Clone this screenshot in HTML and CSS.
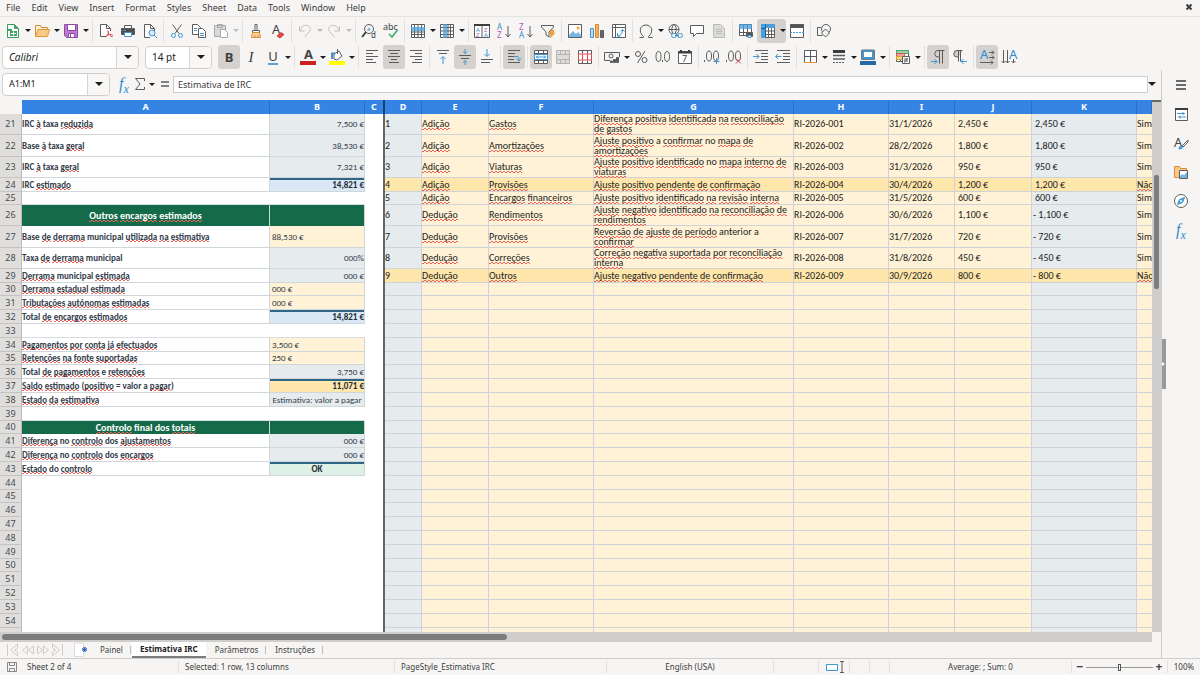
FILE: index.html
```html
<!DOCTYPE html>
<html lang="en">
<head>
<meta charset="utf-8">
<title>Estimativa IRC</title>
<link rel="stylesheet" href="styles.css">
</head>
<body>
<nav class="menubar" aria-label="Menu">
  <button>File</button><button>Edit</button><button>View</button><button>Insert</button><button>Format</button><button>Styles</button><button>Sheet</button><button>Data</button><button>Tools</button><button>Window</button><button>Help</button>
  <button class="close" aria-label="Close document"><svg viewBox="0 0 8 8" width="8" height="8"><path class="thick" d="M1.500 1.500l5 5M6.500 1.500l-5 5"/></svg></button>
</nav>

<div class="toolbar standard" role="toolbar" aria-label="Standard">
  <button class="tb" aria-label="New"><svg viewBox="0 0 16 16"><path class="g" fill="#fff" d="M2.500 1.500h7l4 4v9h-11z"/><path class="fg" d="M9 1l5 5H9zM3 6h4v2H3zM5 8h7v5H5z"/><path stroke="#fff" d="M6 10.500h5M8.500 8.500v4"/></svg></button><button class="dd" aria-label="New options"></button>
  <button class="tb" aria-label="Open"><svg viewBox="0 0 16 16"><path stroke="#c98f3c" fill="#fff0d0" d="M1.500 13V2.500h5l1 2h6v3"/><path stroke="#e2973b" fill="#f8c987" d="M1.500 13.500L4 6.500h11.500l-2 7z"/></svg></button><button class="dd" aria-label="Recent files"></button>
  <button class="tb" aria-label="Save"><svg viewBox="0 0 16 16"><path stroke="#8d4aa6" fill="#bd78cf" d="M1.500 1.500h13v13H4l-2.500-2z"/><path fill="#fff" stroke="#8d4aa6" d="M4.500 1.500h8v6h-8zM5.500 10.500h6v4h-6z"/><path stroke="#8d4aa6" d="M7.500 11v3"/></svg></button><button class="dd" aria-label="Save options"></button>
  <i class="sep"></i>
  <button class="tb" aria-label="Export as PDF"><svg viewBox="0 0 16 16"><path fill="#fff" d="M8 13.500H2.500v-12h6l4 4V8M8.500 1.500v4h4"/><path class="r" d="M7 14c3-1 4-4 3-6.500M8 13c2-2 5-2 7-.5M10 8c0 3 2 5 4.500 6"/></svg></button>
  <button class="tb" aria-label="Print"><svg viewBox="0 0 16 16"><path d="M4.500 5V2.500h7V5" fill="#fff"/><path fill="#4b4f52" d="M1.500 5.500h13v6h-13z"/><path class="b" fill="#fff" d="M4.500 9.500h7v4h-7z"/><path class="b" d="M3 7.500h3"/></svg></button>
  <button class="tb" aria-label="Print preview"><svg viewBox="0 0 16 16"><path fill="#fff" d="M8 14.500H2.500v-13h6l4 4V8M8.500 1.500v4h4"/><circle class="b" cx="10" cy="10" r="3" fill="#d8ecf8"/><path class="b" d="M12 12l3 3"/></svg></button>
  <i class="sep"></i>
  <button class="tb" aria-label="Cut"><svg viewBox="0 0 16 16"><path d="M3.500 1.500L10 10.500M12.500 1.500L6 10.500"/><circle class="b" cx="4.500" cy="12.500" r="2"/><circle class="b" cx="11.500" cy="12.500" r="2"/></svg></button>
  <button class="tb" aria-label="Copy"><svg viewBox="0 0 16 16"><path fill="#fff" d="M1.500 1.500h5l3 3v7h-8z"/><path fill="#fff" d="M7.500 5.500h4l3 3v6h-7z"/><path class="b" d="M3 5.500h3M3 7.500h3M9 10.500h4M9 12.500h4"/></svg></button>
  <button class="tb off" aria-label="Paste" disabled><svg viewBox="0 0 16 16"><path fill="#d8d8d8" stroke="#aaa" d="M1.500 2.500h11v11h-11zM4.500 1.500h5v3h-5z"/><path fill="#fff" stroke="#aaa" d="M7.500 6.500h4l3 3v5h-7z"/></svg></button><button class="dd off" aria-label="Paste options" disabled></button>
  <i class="sep"></i>
  <button class="tb" aria-label="Clone formatting"><svg viewBox="0 0 16 16"><path fill="#fff" d="M7 1.500h2v6H7zM4.500 7.500h7v2h-7z"/><path stroke="#d98a3a" fill="#f8d3a0" d="M4.500 9.500h7l1 5h-9zM7 12v2M10 12v2"/></svg></button>
  <button class="tb" aria-label="Clear formatting"><svg viewBox="0 0 16 16"><text class="tl" x="2" y="11">A</text><path fill="#e2484d" stroke="#c43" d="M7 13l4-3.500 3 2-4 3.500z"/></svg></button>
  <i class="sep"></i>
  <button class="tb off" aria-label="Undo" disabled><svg viewBox="0 0 16 16"><path stroke="#c4c2c0" d="M2.500 3v5h5M2.500 8l3-4.500c4-3 10 0 7 5l-5 5.500"/></svg></button><button class="dd off" aria-label="Undo list" disabled></button>
  <button class="tb off" aria-label="Redo" disabled><svg viewBox="0 0 16 16"><path stroke="#c4c2c0" d="M13.500 3v5h-5M13.500 8l-3-4.500c-4-3-10 0-7 5l5 5.500"/></svg></button><button class="dd off" aria-label="Redo list" disabled></button>
  <i class="sep"></i>
  <button class="tb" aria-label="Find and replace"><svg viewBox="0 0 16 16"><circle cx="8" cy="6" r="4.500"/><path class="thick" d="M5 9l-4 5"/><text class="ts tb-blue" x="6" y="8">a</text><text class="tm" x="10" y="15">d</text></svg></button>
  <button class="tb" aria-label="Spelling"><svg viewBox="0 0 16 16"><text class="tx" x="0" y="7">abc</text><path stroke="#3fae6a" stroke-width="1.500" d="M6 11l3 3 5.500-7"/></svg></button>
  <i class="sep"></i>
  <button class="tb" aria-label="Row"><svg viewBox="0 0 16 16"><path fill="#fff" d="M1.500 1.500h13v13h-13z"/><path d="M1.500 11.500h13M4.500 1.500v13M8 1.500v13M11.500 1.500v13M1.500 9h13"/><path class="fb" d="M1 4h14v4H1z"/></svg></button><button class="dd" aria-label="Row options"></button>
  <button class="tb" aria-label="Column"><svg viewBox="0 0 16 16"><path fill="#fff" d="M1.500 1.500h13v13h-13z"/><path d="M11.500 1.500v13M1.500 4.500h13M1.500 8h13M1.500 11.500h13M9 1.500v13"/><path class="fb" d="M4 1h4v14H4z"/></svg></button><button class="dd" aria-label="Column options"></button>
  <i class="sep"></i>
  <button class="tb" aria-label="Sort"><svg viewBox="0 0 16 16"><path fill="#fff" d="M.5 1.500h15v13H.5zM8 3v11"/><path class="thick" d="M0 2h16"/><text class="ts tb-blue" x="2" y="9">A</text><text class="ts tb-pink" x="2" y="14">Z</text><text class="ts tb-pink" x="10" y="9">Z</text><text class="ts tb-blue" x="10" y="14">A</text></svg></button>
  <button class="tb" aria-label="Sort ascending"><svg viewBox="0 0 16 16"><text class="tm tb-blue" x="1" y="7">A</text><text class="tm tb-pink" x="1" y="15">Z</text><path d="M12 3v11M9.500 11l2.500 3 2.500-3"/></svg></button>
  <button class="tb" aria-label="Sort descending"><svg viewBox="0 0 16 16"><text class="tm tb-pink" x="1" y="7">Z</text><text class="tm tb-blue" x="1" y="15">A</text><path d="M12 3v11M9.500 11l2.500 3 2.500-3"/></svg></button>
  <button class="tb" aria-label="AutoFilter"><svg viewBox="0 0 16 16"><path d="M1.500 2.500h12v1.500L9 9v5l-3-2V9L1.500 4z"/><path fill="#f4a23c" stroke="#e08a2a" stroke-width=".5" d="M11 7h3l-1 3h2l-5 5 1-4H9.500z"/></svg></button>
  <i class="sep"></i>
  <button class="tb" aria-label="Insert image"><svg viewBox="0 0 16 16"><path fill="#fff" d="M1.500 1.500h13v13h-13z"/><path class="fb" d="M2 14v-2l4-4 3 3 2-2 3 3v2z"/><circle cx="11" cy="5" r="1.500" fill="#f4a23c" stroke="none"/></svg></button>
  <button class="tb" aria-label="Insert chart"><svg viewBox="0 0 16 16"><path class="b" fill="#b9dcf2" d="M1.500 5.500h3v9h-3z"/><path stroke="#d98a3a" fill="#f4b060" d="M6.500 1.500h3v13h-3z"/><path fill="#666" d="M11.500 7.500h3v7h-3z"/></svg></button>
  <button class="tb" aria-label="Insert pivot table"><svg viewBox="0 0 16 16"><path fill="#fff" d="M1.500 1.500h13v13h-13zM1.500 4.500h13M4.500 1.500v13"/><path class="b" d="M6.500 10v3h3M6.500 13c4-1 5-3 5-6M9.500 8.500l2-2 2 2"/></svg></button>
  <i class="sep"></i>
  <button class="tb" aria-label="Special character"><svg viewBox="0 0 16 16"><path d="M1.500 14.500h4v-1C0 9 2 2 8 2s8 7 2.500 11.500v1h4"/></svg></button><button class="dd" aria-label="More characters"></button>
  <button class="tb" aria-label="Hyperlink"><svg viewBox="0 0 16 16"><circle cx="7" cy="6.500" r="5"/><path d="M2 6.500h10M7 1.500c-3 3-3 7 0 10M7 1.500c3 3 3 7 0 10"/><rect class="b" fill="#f6f5f4" x="4.500" y="10.500" width="5" height="4" rx="2"/><rect class="b" fill="#f6f5f4" x="10.500" y="10.500" width="5" height="4" rx="2"/><path class="b" d="M8 12.500h4"/></svg></button>
  <button class="tb" aria-label="Comment"><svg viewBox="0 0 16 16"><path fill="#fff" d="M1.500 2.500h13v8h-7l-3 3v-3h-3z"/></svg></button>
  <button class="tb off" aria-label="Headers and footers" disabled><svg viewBox="0 0 16 16"><path fill="#dcdbda" stroke="#bbb" d="M2.500 1.500h7l4 4v9h-11zM5 6.500h6M5 8.500h6M5 10.500h6"/></svg></button>
  <i class="sep"></i>
  <button class="tb" aria-label="Print area"><svg viewBox="0 0 16 16"><path fill="#fff" d="M1.500 1.500h12v11h-12zM1.500 9.500h12M5.500 1.500v11M9.500 1.500v11"/><path class="fb" d="M1 1h13v5H1z"/><path fill="#555" d="M8.500 9.500h6v4h-6z"/><path class="b" fill="#fff" d="M10 12.500h3v2h-3z"/></svg></button>
  <button class="tb on left" aria-label="Freeze rows and columns" aria-pressed="true"><svg viewBox="0 0 16 16"><path fill="#fff" d="M1.500 1.500h13v13h-13zM1.500 8h13M1.500 11.500h13M8.500 1.500v13M11.500 1.500v13"/><path fill="#4a9fdc" stroke="none" d="M1 1h14v4H6v10H1z"/><path stroke="#1d5f96" d="M1 5.500h4.500V15M5.500 1.500v4"/></svg></button><button class="dd on" aria-label="Freeze options"></button>
  <button class="tb" aria-label="Split window"><svg viewBox="0 0 16 16"><path fill="#fff" d="M1.500 1.500h13v13h-13z"/><path fill="#555" d="M1.500 1.500h13v3h-13z"/><path class="b" stroke-dasharray="2 1" d="M1 9.500h14"/></svg></button>
  <i class="sep"></i>
  <button class="tb" aria-label="Show draw functions"><svg viewBox="0 0 16 16"><path d="M5 4.500H1.500v8h5"/><circle cx="10" cy="6" r="4.500"/><path fill="#f6f5f4" d="M9.500 6l4 4-4 4-4-4z"/></svg></button>
</div>

<div class="toolbar formatting" role="toolbar" aria-label="Formatting">
  <div class="combo fontname"><input aria-label="Font name" value="Calibri"><button aria-label="Font list"></button></div>
  <div class="combo fontsize"><input aria-label="Font size" value="14 pt"><button aria-label="Size list"></button></div>
  <button class="tb on glyph" aria-label="Bold" aria-pressed="true"><b>B</b></button>
  <button class="tb glyph" aria-label="Italic"><em>I</em></button>
  <button class="tb glyph" aria-label="Underline"><span class="und">U</span></button><button class="dd" aria-label="Underline styles"></button>
  <i class="sep"></i>
  <button class="tb" aria-label="Font color"><svg viewBox="0 0 16 16"><text class="tl strong" x="4" y="10">A</text><path fill="#c9211e" stroke="none" d="M0 12h16v4H0z"/></svg></button><button class="dd" aria-label="Font colors"></button>
  <button class="tb" aria-label="Background color"><svg viewBox="0 0 16 16"><path fill="#fff" d="M5 5l5-3 3 5-5 4-3-1z"/><path class="b" stroke-width="2" d="M3 10V4.500h3"/><path d="M8.500 0v5"/><path fill="#ff0" stroke="none" d="M0 12h16v4H0z"/></svg></button><button class="dd" aria-label="Background colors"></button>
  <i class="sep"></i>
  <button class="tb" aria-label="Align left"><svg viewBox="0 0 16 16"><path d="M2 1.500h12M2 4.500h7M2 7.500h12M2 10.500h7M2 13.500h10"/></svg></button>
  <button class="tb on" aria-label="Center" aria-pressed="true"><svg viewBox="0 0 16 16"><path d="M2 1.500h12M4 4.500h8M2 7.500h12M5 10.500h6M3 13.500h10"/></svg></button>
  <button class="tb" aria-label="Align right"><svg viewBox="0 0 16 16"><path d="M2 1.500h12M7 4.500h7M2 7.500h12M7 10.500h7M4 13.500h10"/></svg></button>
  <i class="sep"></i>
  <button class="tb" aria-label="Align top"><svg viewBox="0 0 16 16"><path d="M2 1.500h12M4 4.500h8"/><path class="b" d="M8 15V8M5.500 10L8 7.500l2.500 2.500"/></svg></button>
  <button class="tb on" aria-label="Center vertically" aria-pressed="true"><svg viewBox="0 0 16 16"><path d="M2 6.500h12M4 9.500h8"/><path class="b" d="M8 0v4.500M6 2.500l2 2 2-2M8 16v-4.500M6 13.500l2-2 2 2"/></svg></button>
  <button class="tb" aria-label="Align bottom"><svg viewBox="0 0 16 16"><path d="M2 10.500h12M2 13.500h9"/><path class="b" d="M8 0v7M5.500 5L8 7.500 10.500 5"/></svg></button>
  <i class="sep"></i>
  <button class="tb on" aria-label="Wrap text" aria-pressed="true"><svg viewBox="0 0 16 16"><path d="M2 1.500h12M2 4.500h7M2 7.500h6M2 10.500h6M2 13.500h12"/><path class="b" d="M8 7.500h3c2 0 2 1 2 4M10.500 9.500l2.500 2.500 2-2.500"/></svg></button>
  <i class="sep"></i>
  <button class="tb on" aria-label="Merge and center" aria-pressed="true"><svg viewBox="0 0 16 16"><path fill="#fff" d="M1.500 1.500h13v13h-13zM1.500 4.500h13M1.500 11.500h13M5.500 1.500v3M10.500 1.500v3M5.500 11.500v3M10.500 11.500v3"/><path class="b" fill="#fff" d="M1.500 5.500h13v5h-13zM3 8h10M5 6.500L3.500 8 5 9.500M11 6.500L12.500 8 11 9.500"/></svg></button>
  <button class="tb off" aria-label="Merge cells" disabled><svg viewBox="0 0 16 16"><path fill="#dcdbda" stroke="#b5b3b1" d="M1.500 1.500h13v13h-13zM1.500 5.500h13M1.500 10.500h13M5.500 1.500v4M10.500 1.500v4M5.500 10.500v4M10.500 10.500v4"/></svg></button>
  <button class="tb" aria-label="Unmerge cells"><svg viewBox="0 0 16 16"><path fill="#fff" d="M1.500 1.500h13v13h-13zM5.500 1.500v3M10.500 1.500v3M5.500 11.500v3M10.500 11.500v3"/><path class="r" d="M1.500 5h13v6h-13zM5.500 5v6M10.500 5v6"/></svg></button>
  <i class="sep"></i>
  <button class="tb" aria-label="Currency format"><svg viewBox="0 0 16 16"><path d="M15.500 8V3.500H.5v8H6"/><circle cx="7" cy="7" r="2"/><path fill="#555" d="M9.500 10.500h2v3h-2zM12.500 8.500h2v5h-2zM6.500 12h2v1.500h-2z"/></svg></button><button class="dd" aria-label="Currencies"></button>
  <button class="tb" aria-label="Percent format"><svg viewBox="0 0 16 16"><circle cx="5" cy="5" r="2.500"/><circle cx="11.500" cy="11" r="2.500"/><path d="M12 2L4.500 14"/></svg></button>
  <button class="tb" aria-label="Number format"><svg viewBox="0 0 16 16"><ellipse cx="3.500" cy="7.500" rx="2.500" ry="5"/><path d="M7.500 11v2"/><ellipse cx="12" cy="7.500" rx="2.500" ry="5"/></svg></button>
  <button class="tb" aria-label="Date format"><svg viewBox="0 0 16 16"><path fill="#fff" d="M1.500 2.500h13v12h-13z"/><path class="thick" d="M1 3.500h14M4 1v2M12 1v2"/><text class="tx" x="5" y="13">7</text></svg></button>
  <i class="sep"></i>
  <button class="tb" aria-label="Add decimal place"><svg viewBox="0 0 16 16"><ellipse cx="5" cy="7" rx="2.500" ry="5"/><ellipse cx="12" cy="7" rx="2.500" ry="5"/><path d="M.5 11v2"/><path class="b" d="M12.500 9v6M9.500 12.500h6"/></svg></button>
  <button class="tb" aria-label="Delete decimal place"><svg viewBox="0 0 16 16"><ellipse cx="5" cy="7" rx="2.500" ry="5"/><ellipse cx="12" cy="7" rx="2.500" ry="5"/><path d="M.5 11v2"/><path class="r" d="M10 9.500l5 5M15 9.500l-5 5"/></svg></button>
  <i class="sep"></i>
  <button class="tb" aria-label="Increase indent"><svg viewBox="0 0 16 16"><path d="M2 1.500h13M8 4.500h7M8 7.500h7M8 10.500h7M2 13.500h13"/><path class="b" d="M0 7.500h6M3.500 5L6 7.500 3.500 10"/></svg></button>
  <button class="tb" aria-label="Decrease indent"><svg viewBox="0 0 16 16"><path d="M2 1.500h13M8 4.500h7M8 7.500h7M8 10.500h7M2 13.500h13"/><path class="b" d="M6.500 7.500h-6M3 5L.5 7.500 3 10"/></svg></button>
  <i class="sep"></i>
  <button class="tb" aria-label="Borders"><svg viewBox="0 0 16 16"><path fill="#fff" d="M2.500 1.500h12v12h-12zM8.500 1.500v12M2.500 7.500h12"/><path stroke="#e2973b" d="M2 13.500h13"/></svg></button><button class="dd" aria-label="Border presets"></button>
  <button class="tb" aria-label="Border style"><svg viewBox="0 0 16 16"><path stroke="#3d3d3d" stroke-width="3" d="M2 2.500h12"/><path d="M2 6.500h12M2 10h12" stroke-width="1.500"/><path d="M2 13.500h12" stroke-dasharray="2 1"/></svg></button><button class="dd" aria-label="Border styles"></button>
  <button class="tb" aria-label="Border color"><svg viewBox="0 0 16 16"><path class="b" fill="#fff" stroke-width="2" d="M3 2h10v7H3z"/><path stroke="#777" d="M1.500 1h13v9.500h-13z"/><path fill="#2468a4" stroke="none" d="M0 12h16v4H0z"/></svg></button><button class="dd" aria-label="Border colors"></button>
  <i class="sep"></i>
  <button class="tb" aria-label="Conditional formatting"><svg viewBox="0 0 16 16"><path fill="#fff" d="M1.500 1.500h12v11h-12zM5.500 1.500v11"/><path fill="#9ad3a9" stroke="#4aa766" d="M1.500 1.500h12v3h-12z"/><path fill="#f3a29b" stroke="#d6534c" d="M1.500 4.500h8v3h-8z"/><path fill="#f9d48b" stroke="#dba33b" d="M1.500 7.500h6v3h-6z"/><path fill="#fff" d="M7.500 7.500h7v7h-7zM9 10h4M9 12h4M12.500 9l-3 4.500"/></svg></button><button class="dd" aria-label="Conditional options"></button>
  <i class="sep"></i>
  <button class="tb on" aria-label="Left-to-right" aria-pressed="true"><svg viewBox="0 0 16 16"><path d="M14.500 1.500H8a3 3 0 000 6.500h1.500M9.500 1.500v13M12.500 1.500v13"/><path class="b" d="M1 12.500h6M4.500 10L7 12.500 4.500 15"/></svg></button>
  <button class="tb" aria-label="Right-to-left"><svg viewBox="0 0 16 16"><path fill="#ccc" d="M10.500 1.500H5A3 3 0 005 8h1.500"/><path d="M6.500 1.500v11M8.500 1.500v11"/><path class="b" d="M15 12.500H9M11.500 10L9 12.500l2.500 2.500"/></svg></button>
  <i class="sep"></i>
  <button class="tb on" aria-label="Text left to right" aria-pressed="true"><svg viewBox="0 0 16 16"><text class="tl tb-blue" x="1" y="10">A</text><path d="M10 3.500h5M13 1.500l2 2-2 2M10 8.500h5M13 6.500l2 2-2 2M1 13.500h13M12 11.500l2 2-2 2"/></svg></button>
  <button class="tb" aria-label="Text top to bottom"><svg viewBox="0 0 16 16"><text class="tl tb-blue" x="8" y="10">A</text><path d="M2.500 1v13M.5 12l2 2 2-2M6.500 1v13M4.500 12l2 2 2-2M12.500 10v4M10.500 12l2 2 2-2"/></svg></button>
</div>

<main class="workspace">
  <section class="document">
    <div class="formulabar">
      <div class="combo namebox"><input aria-label="Name box" value="A1:M1"><button aria-label="Named ranges"></button></div>
      <button class="fx" aria-label="Function wizard">f<sub>x</sub></button>
      <button class="fbtn" aria-label="Select function"><svg viewBox="0 0 16 16"><path d="M12.500 5V2.500h-9L8 8l-4.500 5.500h9V11"/></svg></button><button class="dd" aria-label="Functions"></button>
      <button class="fbtn eq" aria-label="Formula"><svg viewBox="0 0 16 16"><path stroke-width="1.500" d="M4 6h8M4 10h8"/></svg></button>
      <input class="formula" aria-label="Input line" value="Estimativa de IRC">
      <button class="dd expand" aria-label="Expand formula bar"></button>
    </div>
    <div class="gridwrap">
      <div class="gridview">
        <table class="sheet">
          <colgroup><col class="c-num"><col class="c-a"><col class="c-b"><col class="c-c"><col class="c-d calc"><col class="c-e entry"><col class="c-f entry"><col class="c-g entry"><col class="c-h entry"><col class="c-i entry"><col class="c-j entry"><col class="c-k calc"><col class="entry"></colgroup>
          <thead><tr><td></td><th>A</th><th>B</th><th class="split">C</th><th>D</th><th>E</th><th>F</th><th>G</th><th>H</th><th>I</th><th>J</th><th>K</th><th></th></tr></thead>
          <tbody>
<tr class="tall"><th>21</th><td class="lab">IRC <u>à</u> taxa <u>reduzida</u></td><td class="val">7,500 €</td><td></td><td>1</td><td><u>Adição</u></td><td><u>Gastos</u></td><td><u>Diferença</u> <u>positiva</u> <u>identificada</u> <u>na</u> <u>reconciliação</u> <u>de</u> <u>gastos</u></td><td>RI-2026-001</td><td>31/1/2026</td><td>2,450 €</td><td>2,450 €</td><td>Sim</td></tr>
<tr class="tall"><th>22</th><td class="lab">Base <u>à</u> taxa <u>geral</u></td><td class="val">38,530 €</td><td></td><td>2</td><td><u>Adição</u></td><td><u>Amortizações</u></td><td><u>Ajuste</u> <u>positivo</u> a <u>confirmar</u> no <u>mapa</u> <u>de</u> <u>amortizações</u></td><td>RI-2026-002</td><td>28/2/2026</td><td>1,800 €</td><td>1,800 €</td><td>Sim</td></tr>
<tr class="tall"><th>23</th><td class="lab">IRC <u>à</u> taxa <u>geral</u></td><td class="val">7,321 €</td><td></td><td>3</td><td><u>Adição</u></td><td><u>Viaturas</u></td><td><u>Ajuste</u> <u>positivo</u> <u>identificado</u> no <u>mapa</u> <u>interno</u> <u>de</u> <u>viaturas</u></td><td>RI-2026-003</td><td>31/3/2026</td><td>950 €</td><td>950 €</td><td>Sim</td></tr>
<tr class="pending"><th>24</th><td class="lab">IRC <u>estimado</u></td><td class="val total">14,821 €</td><td></td><td>4</td><td><u>Adição</u></td><td><u>Provisões</u></td><td><u>Ajuste</u> <u>positivo</u> <u>pendente</u> <u>de</u> <u>confirmação</u></td><td>RI-2026-004</td><td>30/4/2026</td><td>1,200 €</td><td>1,200 €</td><td><u>Não</u></td></tr>
<tr class="blank"><th>25</th><td></td><td></td><td></td><td>5</td><td><u>Adição</u></td><td><u>Encargos</u> <u>financeiros</u></td><td><u>Ajuste</u> <u>positivo</u> <u>identificado</u> <u>na</u> <u>revisão</u> <u>interna</u></td><td>RI-2026-005</td><td>31/5/2026</td><td>600 €</td><td>600 €</td><td>Sim</td></tr>
<tr class="tall"><th>26</th><td class="head"><u>Outros</u> <u>encargos</u> <u>estimados</u></td><td class="head"></td><td></td><td>6</td><td><u>Dedução</u></td><td><u>Rendimentos</u></td><td><u>Ajuste</u> <u>negativo</u> <u>identificado</u> <u>na</u> <u>reconciliação</u> <u>de</u> <u>rendimentos</u></td><td>RI-2026-006</td><td>30/6/2026</td><td>1,100 €</td><td class="neg">- 1,100 €</td><td>Sim</td></tr>
<tr class="tall"><th>27</th><td class="lab">Base <u>de</u> <u>derrama</u> municipal <u>utilizada</u> <u>na</u> <u>estimativa</u></td><td class="inp">88,530 €</td><td></td><td>7</td><td><u>Dedução</u></td><td><u>Provisões</u></td><td><u>Reversão</u> <u>de</u> <u>ajuste</u> <u>de</u> <u>período</u> anterior a <u>confirmar</u></td><td>RI-2026-007</td><td>31/7/2026</td><td>720 €</td><td class="neg">- 720 €</td><td>Sim</td></tr>
<tr class="tall"><th>28</th><td class="lab">Taxa <u>de</u> <u>derrama</u> municipal</td><td class="val">000%</td><td></td><td>8</td><td><u>Dedução</u></td><td><u>Correções</u></td><td><u>Correção</u> <u>negativa</u> <u>suportada</u> <u>por</u> <u>reconciliação</u> <u>interna</u></td><td>RI-2026-008</td><td>31/8/2026</td><td>450 €</td><td class="neg">- 450 €</td><td>Sim</td></tr>
<tr class="pending"><th>29</th><td class="lab"><u>Derrama</u> municipal <u>estimada</u></td><td class="val">000 €</td><td></td><td>9</td><td><u>Dedução</u></td><td><u>Outros</u></td><td><u>Ajuste</u> <u>negativo</u> <u>pendente</u> <u>de</u> <u>confirmação</u></td><td>RI-2026-009</td><td>30/9/2026</td><td>800 €</td><td class="neg">- 800 €</td><td><u>Não</u></td></tr>
<tr><th>30</th><td class="lab"><u>Derrama</u> <u>estadual</u> <u>estimada</u></td><td class="inp">000 €</td><td></td><td></td><td></td><td></td><td></td><td></td><td></td><td></td><td></td><td></td></tr>
<tr><th>31</th><td class="lab"><u>Tributações</u> <u>autónomas</u> <u>estimadas</u></td><td class="inp">000 €</td><td></td><td></td><td></td><td></td><td></td><td></td><td></td><td></td><td></td><td></td></tr>
<tr><th>32</th><td class="lab">Total <u>de</u> <u>encargos</u> <u>estimados</u></td><td class="val total">14,821 €</td><td></td><td></td><td></td><td></td><td></td><td></td><td></td><td></td><td></td><td></td></tr>
<tr class="blank"><th>33</th><td></td><td></td><td></td><td></td><td></td><td></td><td></td><td></td><td></td><td></td><td></td><td></td></tr>
<tr><th>34</th><td class="lab"><u>Pagamentos</u> <u>por</u> <u>conta</u> <u>já</u> <u>efectuados</u></td><td class="inp">3,500 €</td><td></td><td></td><td></td><td></td><td></td><td></td><td></td><td></td><td></td><td></td></tr>
<tr><th>35</th><td class="lab"><u>Retenções</u> <u>na</u> <u>fonte</u> <u>suportadas</u></td><td class="inp">250 €</td><td></td><td></td><td></td><td></td><td></td><td></td><td></td><td></td><td></td><td></td></tr>
<tr><th>36</th><td class="lab">Total <u>de</u> <u>pagamentos</u> e <u>retenções</u></td><td class="val">3,750 €</td><td></td><td></td><td></td><td></td><td></td><td></td><td></td><td></td><td></td><td></td></tr>
<tr><th>37</th><td class="lab"><u>Saldo</u> <u>estimado</u> (<u>positivo</u> = valor a <u>pagar</u>)</td><td class="val total balance">11,071 €</td><td></td><td></td><td></td><td></td><td></td><td></td><td></td><td></td><td></td><td></td></tr>
<tr><th>38</th><td class="lab"><u>Estado</u> <u>da</u> <u>estimativa</u></td><td class="val mid">Estimativa: valor a pagar</td><td></td><td></td><td></td><td></td><td></td><td></td><td></td><td></td><td></td><td></td></tr>
<tr class="blank"><th>39</th><td></td><td></td><td></td><td></td><td></td><td></td><td></td><td></td><td></td><td></td><td></td><td></td></tr>
<tr><th>40</th><td class="head"><u>Controlo</u> final dos <u>totais</u></td><td class="head"></td><td></td><td></td><td></td><td></td><td></td><td></td><td></td><td></td><td></td><td></td></tr>
<tr><th>41</th><td class="lab"><u>Diferença</u> no <u>controlo</u> dos <u>ajustamentos</u></td><td class="val">000 €</td><td></td><td></td><td></td><td></td><td></td><td></td><td></td><td></td><td></td><td></td></tr>
<tr><th>42</th><td class="lab"><u>Diferença</u> no <u>controlo</u> dos <u>encargos</u></td><td class="val">000 €</td><td></td><td></td><td></td><td></td><td></td><td></td><td></td><td></td><td></td><td></td></tr>
<tr><th>43</th><td class="lab"><u>Estado</u> do <u>controlo</u></td><td class="val total mid ok">OK</td><td></td><td></td><td></td><td></td><td></td><td></td><td></td><td></td><td></td><td></td></tr>
<tr><th>44</th><td></td><td></td><td></td><td></td><td></td><td></td><td></td><td></td><td></td><td></td><td></td><td></td></tr>
<tr><th>45</th><td></td><td></td><td></td><td></td><td></td><td></td><td></td><td></td><td></td><td></td><td></td><td></td></tr>
<tr><th>46</th><td></td><td></td><td></td><td></td><td></td><td></td><td></td><td></td><td></td><td></td><td></td><td></td></tr>
<tr><th>47</th><td></td><td></td><td></td><td></td><td></td><td></td><td></td><td></td><td></td><td></td><td></td><td></td></tr>
<tr><th>48</th><td></td><td></td><td></td><td></td><td></td><td></td><td></td><td></td><td></td><td></td><td></td><td></td></tr>
<tr><th>49</th><td></td><td></td><td></td><td></td><td></td><td></td><td></td><td></td><td></td><td></td><td></td><td></td></tr>
<tr><th>50</th><td></td><td></td><td></td><td></td><td></td><td></td><td></td><td></td><td></td><td></td><td></td><td></td></tr>
<tr><th>51</th><td></td><td></td><td></td><td></td><td></td><td></td><td></td><td></td><td></td><td></td><td></td><td></td></tr>
<tr><th>52</th><td></td><td></td><td></td><td></td><td></td><td></td><td></td><td></td><td></td><td></td><td></td><td></td></tr>
<tr><th>53</th><td></td><td></td><td></td><td></td><td></td><td></td><td></td><td></td><td></td><td></td><td></td><td></td></tr>
<tr><th>54</th><td></td><td></td><td></td><td></td><td></td><td></td><td></td><td></td><td></td><td></td><td></td><td></td></tr>
<tr><th></th><td></td><td></td><td></td><td></td><td></td><td></td><td></td><td></td><td></td><td></td><td></td><td></td></tr>
          </tbody>
        </table>
      </div>
      <div class="vscroll"><i></i></div>
      <div class="hscroll"><i></i></div>
    </div>
    <div class="tabs">
      <div class="nav">
        <button aria-label="First sheet"><svg viewBox="0 0 14 14"><path d="M2 1v12M12 1L5 7l7 6V9L9 7l3-2z"/></svg></button><button aria-label="Previous sheet"><svg viewBox="0 0 14 14"><path d="M7 3L2 7l5 4zM13 3L8 7l5 4z"/></svg></button><button aria-label="Next sheet"><svg viewBox="0 0 14 14"><path d="M2 3l5 4-5 4zM8 3l5 4-5 4z"/></svg></button><button aria-label="Last sheet"><svg viewBox="0 0 14 14"><path d="M12 1v12M2 1l7 6-7 6V9l3-2-3-2z"/></svg></button>
      </div>
      <button class="addsheet" aria-label="Add sheet"><svg viewBox="0 0 14 14"><path stroke="#dedcda" fill="#fff" d="M.5 0h9v13.500h-9z"/><circle cx="10.500" cy="6.500" r="2" fill="#fff" stroke="#2a62b0"/><path stroke="#2a62b0" d="M10.500 5v3M9 6.500h3"/></svg></button>
      <button class="tab">Painel</button><button class="tab current">Estimativa IRC</button><button class="tab">Parâmetros</button><button class="tab">Instruções</button>
    </div>
  </section>
  <aside class="sidebar">
    <button class="handle" aria-label="Hide sidebar"></button>
    <button aria-label="Sidebar settings"><svg viewBox="0 0 16 16"><path stroke="#3d3d3d" stroke-width="1.500" d="M3 4h10M3 8h10M3 12h10"/></svg></button>
    <button aria-label="Properties"><svg viewBox="0 0 16 16"><path fill="#fff" d="M2.500 2.500h12v12h-12z"/><path class="thick" d="M2 3h13"/><path class="b" d="M4 7.500h8M10 6v3M5 11h8M7 9.500v3"/></svg></button>
    <button aria-label="Styles"><svg viewBox="0 0 16 16"><text class="tl" x="1" y="12">A</text><path fill="#fff" d="M15 5l-6 6 1 1 5-5z"/><path class="b" fill="#4a9fdc" d="M6 14c0-2 1-3 3-3 1 2 0 3-3 3z"/></svg></button>
    <button aria-label="Gallery"><svg viewBox="0 0 16 16"><path stroke="#d98a3a" fill="#f8c987" d="M1.500 13.500v-11h5l1 2h6v9z"/><path fill="#fff" d="M6.500 6.500h8v8h-8z"/><path class="fb" d="M7 14v-2l2-2 2 1 3-3v6z"/></svg></button>
    <button aria-label="Navigator"><svg viewBox="0 0 16 16"><circle cx="8" cy="8" r="6.500" fill="#fff"/><path class="b" fill="#4a9fdc" d="M11.500 4.500L9.500 9.500l-5 2 2-5z"/><circle cx="8" cy="8" r="1" fill="#fff" stroke="none"/></svg></button>
    <button class="fx" aria-label="Functions">f<sub>x</sub></button>
  </aside>
</main>

<footer class="status">
  <span class="save"><svg viewBox="0 0 12 12"><path d="M1.500 1.500h9v9h-9zM3.500 1.500v3h5v-3M3.500 10.500v-3h5v3"/></svg></span>
  <span class="first">Sheet 2 of 4</span>
  <span>Selected: 1 row, 13 columns</span>
  <span>PageStyle_Estimativa IRC</span>
  <span class="mid">English (USA)</span>
  <span></span>
  <span class="mode"><svg viewBox="0 0 20 12"><path class="b" fill="#fff" d="M1.500 3.500h11v6h-11z"/><path d="M15 .5h4M17 .5v11M15 11.500h4"/></svg></span>
  <span></span><span></span>
  <span class="mid">Average: ; Sum: 0</span>
  <span class="zoom"><button aria-label="Zoom out">−</button><input type="range" min="0" max="100" value="50" aria-label="Zoom"><button aria-label="Zoom in">+</button></span>
  <span class="mid">100%</span>
</footer>
</body>
</html>
```

FILE: styles.css
```css
* { box-sizing: border-box; }

body {
  margin: 0;
  height: 100vh;
  display: flex;
  flex-direction: column;
  overflow: hidden;
  background: #f6f5f4;
  color: #3d3d3d;
  font: 9px/12px "Noto Sans", sans-serif;
}

button, input {
  margin: 0;
  padding: 0;
  border: 0;
  background: none;
  color: inherit;
  font: inherit;
}

svg {
  display: block;
  overflow: visible;
  fill: none;
  stroke: #5c5c5c;
}

svg .b { stroke: #3f96d2; }
svg .r { stroke: #dd4b50; }
svg .g { stroke: #3a9a5c; }
svg .fb { fill: #4a9fdc; fill-opacity: .75; stroke: none; }
svg .fg { fill: #43a566; stroke: none; }
svg .thick { stroke: #3d3d3d; stroke-width: 2; }
svg text { stroke: none; fill: #444; font-family: "Noto Sans", sans-serif; }
svg .tl { font-size: 13px; }
svg .tx { font-size: 9px; }
svg .tm { font-size: 8px; }
svg .ts { font-size: 6px; }
svg .strong { font-weight: bold; }
svg .tb-blue { fill: #2f8bcb; }
svg .tb-pink { fill: #b455b8; }

/* Menu */
.menubar {
  display: flex;
  align-items: flex-end;
  gap: 11px;
  height: 17px;
  padding: 0 7px 2px 6px;
  border-bottom: 1px solid #e4e2e0;
}
.menubar .close { margin-left: auto; padding-bottom: 3px; }

/* Toolbars */
.toolbar {
  display: flex;
  align-items: center;
  padding-left: 2px;
  overflow: hidden;
}
.standard { height: 27px; }
.formatting { height: 26px; }
.tb {
  flex: none;
  width: 22px;
  height: 24px;
  display: flex;
  align-items: center;
  justify-content: center;
  border-radius: 3px;
}
.tb svg { width: 16px; height: 16px; }
.on { background: #d4d1ce; }
.on.left { border-radius: 3px 0 0 3px; }
.dd {
  flex: none;
  width: 7px;
  height: 24px;
  display: flex;
  align-items: center;
  justify-content: center;
}
.dd::before, .combo button::before {
  content: "";
  border: 3px solid transparent;
  border-top: 3px solid #1d1d1d;
  border-bottom: 0;
}
.dd.on { border-radius: 0 3px 3px 0; }
.dd.off::before { border-top-color: #bbb; }
.sep {
  flex: none;
  width: 1px;
  height: 22px;
  margin: 0 2px;
  background: #e2e0de;
}
.dd + .sep { margin-left: 3px; }
.glyph { font: 13px/20px "Noto Sans", sans-serif; }
.glyph em { font: italic 15px/20px "Liberation Serif", serif; }
.und { line-height: 14px; border-bottom: 2px solid #5aa5d8; }

.combo {
  display: flex;
  flex: none;
  height: 23px;
  border: 1px solid #d2cecb;
  border-radius: 4px;
  background: #fff;
  overflow: hidden;
}
.combo input { flex: 1; min-width: 0; padding-left: 6px; font-size: 10px; color: #222; }
.combo button {
  width: 22px;
  display: flex;
  align-items: center;
  justify-content: center;
  border-left: 1px solid #d8d4d1;
  background: #f8f7f6;
}
.combo button::before { border-width: 4px 4px 0; }
.fontname { width: 137px; margin-right: 6px; }
.fontname input { font-style: italic; }
.fontsize { width: 67px; margin-right: 6px; }

/* Work area */
.workspace { flex: 1; min-height: 0; display: flex; }
.document { flex: 1; min-width: 0; display: flex; flex-direction: column; }
.formulabar {
  display: flex;
  align-items: center;
  height: 30px;
  padding: 0 6px 2px 2px;
}
.namebox { width: 108px; margin-right: 6px; }
.namebox input { font-size: 9px; }
.fx {
  width: 16px;
  font: italic 16px/16px "Liberation Serif", serif;
  color: #2f8bcb;
}
.fx sub { font-size: 12px; line-height: 1px; }
.fbtn { width: 16px; }
.fbtn svg { width: 16px; height: 16px; }
.eq { margin-left: 2px; }
.formula {
  flex: 1;
  min-width: 0;
  height: 17px;
  padding: 0 4px;
  border: 1px solid #d2cecb;
  background: #fff;
}
.expand::before { border-width: 4px 4px 0; }

.gridwrap {
  flex: 1;
  min-height: 0;
  display: grid;
  grid-template: minmax(0, 1fr) 10px / minmax(0, 1fr) 9px;
}
.gridview { overflow: hidden; background: #fff; }
.vscroll {
  padding: 73px 2px 0;
  border-top: 2px solid #666;
  background: #cfcecd;
}
.vscroll i { display: block; height: 25%; border-radius: 2px; background: #7e7e7e; }
.hscroll { padding: 2px; background: #cfcecd; }
.hscroll i { display: block; width: 44%; height: 6px; border-radius: 3px; background: #7c7c7c; }

.sheet {
  width: 100%;
  table-layout: fixed;
  border-spacing: 0;
  font: 10px/10px Carlito, Lato, sans-serif;
  color: #222;
}
.c-num { width: 22px; }
.c-a { width: 248px; }
.c-b { width: 95px; }
.c-c { width: 20px; }
.c-d { width: 37px; }
.c-e { width: 67px; }
.c-f { width: 105px; }
.c-g { width: 200px; }
.c-h { width: 95px; }
.c-i { width: 66px; }
.c-j { width: 77px; }
.c-k { width: 105px; }
.calc { background: #e6ebee; }
.entry { background: #fff2d6; }

.sheet td, .sheet th { height: 14px; padding: 0; }
.sheet tr:nth-child(5n) > * { height: 13px; }
.sheet .tall > * { height: 21px; }
.sheet .tall:nth-child(5n+2) > * { height: 22px; }
.sheet thead td { background: #f6f5f4; }
.sheet thead th {
  border-right: 1px solid #2b70c6;
  background: #3584e4;
  color: #fff;
  font: bold 9px/12px "Noto Sans", sans-serif;
}
.sheet thead .split { border-right: 2px solid #173e6b; }
.sheet tbody th {
  border-right: 1px solid #bdbbb9;
  border-bottom: 1px solid #c6c4c2;
  background: #dfdedd;
  font: 9px/12px "Noto Sans", sans-serif;
  color: #4a4a4a;
}
.sheet td:nth-child(n+5) {
  border-right: 1px solid #cdd3d8;
  border-bottom: 1px solid #cdd3d8;
}
.sheet tbody td:nth-child(4) { border-right: 2px solid #666; }
.sheet .blank td:nth-child(-n+3) { border-bottom: 1px solid #d8dcdf; }
.sheet td:nth-child(11), .sheet td:nth-child(12) { padding-left: 3px; }
.sheet td.neg { padding-left: 1px; }
.sheet .pending td:nth-child(n+5) { background: #ffe6ab; }
.sheet td:last-child { border-right: 0; }

/* Spelling marks: two offset rows of dashes read as a small wave */
.sheet u {
  text-decoration: none;
  background:
    linear-gradient(90deg, #e8655c 2px, transparent 2px) 0 100% / 4px 1px repeat-x,
    linear-gradient(90deg, #e8655c 2px, transparent 2px) 2px calc(100% - 1px) / 4px 1px repeat-x;
}
.sheet .lab, .sheet .val, .sheet .inp {
  border-right: 1px solid #d0d6da;
  border-bottom: 1px solid #d0d6da;
  font-size: 9px;
  color: #333d4a;
}
.sheet .lab { font-weight: bold; }
.sheet .val { background: #e6ebee; text-align: right; }
.sheet .inp { padding-left: 2px; background: #fff2d6; }
.sheet .total {
  background: #dae8f6;
  box-shadow: inset 0 2px #2f6685;
  font-weight: bold;
  color: #222b36;
}
.sheet .balance { background: #ffe6ab; }
.sheet .mid { text-align: center; }
.sheet .ok { background: #dff1e6; }
.sheet .head {
  border-right: 1px solid #d0d6da;
  background: #156b49;
  color: #fff;
  font-weight: bold;
  text-align: center;
}

/* Sheet tabs */
.tabs { display: flex; gap: 1px; height: 16px; font-size: 8px; }
.nav { display: flex; padding-left: 5px; }
.nav svg { width: 15px; height: 14px; stroke: #cfcdcb; }
.addsheet { width: 14px; margin: 0 3px 0 8px; }
.addsheet svg { width: 14px; height: 14px; }
.tab { position: relative; padding: 0 8px; }
.tab::after {
  content: "";
  position: absolute;
  right: 0;
  top: 4px;
  height: 8px;
  border-right: 1px solid #bbb;
}
.tab.current { border-bottom: 2px solid #7c7c7c; background: #fff; font-weight: bold; color: #222; }
.tab.current::after { display: none; }

/* Sidebar */
.sidebar {
  position: relative;
  width: 39px;
  display: flex;
  flex-direction: column;
  align-items: center;
  gap: 13px;
  padding-top: 7px;
  border-left: 1px solid #d0cecc;
}
.sidebar svg { width: 16px; height: 16px; }
.sidebar .handle {
  position: absolute;
  left: 0;
  top: 269px;
  width: 4px;
  height: 50px;
  background: #999;
}
.sidebar .handle::before {
  content: "";
  display: block;
  border-left: 3px solid #fff;
  border-top: 2px solid transparent;
  border-bottom: 2px solid transparent;
}

/* Status bar */
.status {
  display: grid;
  grid-template-columns: 21px 157fr 216fr 212fr 167fr 45fr 31px 20px 20px 182fr 96px 33px;
  align-items: center;
  height: 17px;
  border-top: 1px solid #d0cecc;
  font-size: 8px;
}
.status > span {
  height: 12px;
  padding-left: 6px;
  border-left: 1px solid #e2e0de;
  white-space: nowrap;
}
.status > .save, .status > .first { border-left: 0; }
.status .mid { padding: 0; text-align: center; }
.status .save svg { width: 12px; height: 12px; stroke: #888; }
.status .mode svg { width: 20px; height: 12px; }
.status .zoom { display: flex; align-items: center; gap: 1px; padding: 0 3px; }
.zoom button { width: 10px; font: bold 12px/12px "Noto Sans", sans-serif; }
.zoom input {
  flex: 1;
  min-width: 0;
  height: 12px;
  appearance: none;
  background: linear-gradient(#999, #999) center / 100% 1px no-repeat;
}
.zoom input::-webkit-slider-thumb {
  appearance: none;
  width: 3px;
  height: 7px;
  border: 1px solid #555;
  background: #fff;
}
```
